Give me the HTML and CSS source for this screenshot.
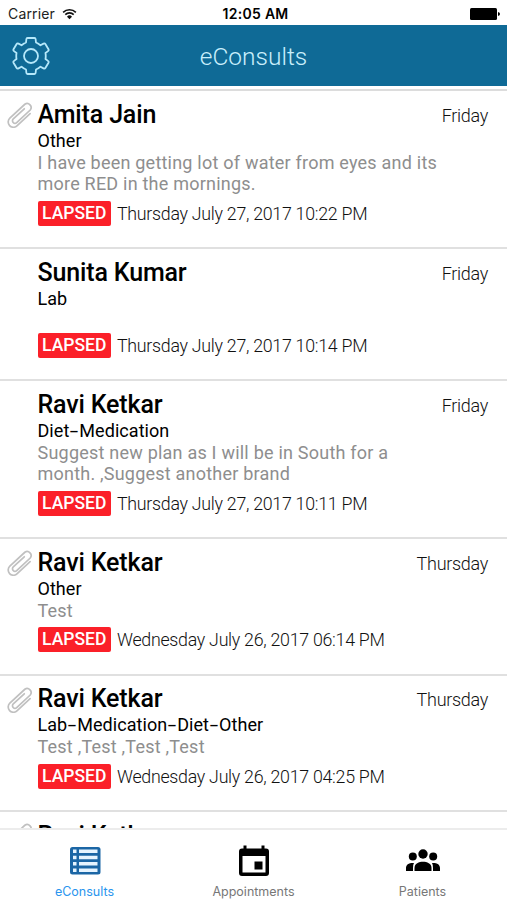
FILE: index.html
```html
<!DOCTYPE html>
<html lang="en">
<head>
  <meta charset="UTF-8">
  <meta name="viewport" content="width=device-width, initial-scale=1.0">
  <title>eConsults</title>
  <link rel="stylesheet" href="styles.css">
</head>
<body>
  <!-- icons used more than once -->
  <svg class="defs" width="0" height="0">
    <symbol id="clip" viewBox="0 0 28 26">
      <path transform="translate(13.500 13) rotate(-43)" d="M8 5.500 H-10 A5.200 5.200 0 0 1 -10 -4.900 H10.500 A4 4 0 0 1 10.500 3 H-8 A2.500 2.500 0 0 1 -8 -2 H7" fill="none" stroke="#c0c0c0" stroke-width="1.700" stroke-linecap="round"/>
    </symbol>
  </svg>

  <div class="status-bar">
    <div class="carrier">
      <span>Carrier</span>
      <svg class="wifi" viewBox="0 0 16 12">
        <path d="M1.200 4.200 A9.800 9.800 0 0 1 14.800 4.200 M3.500 6.600 A6.400 6.400 0 0 1 12.500 6.600" fill="none" stroke="#111" stroke-width="1.700"/>
        <path d="M8 11.500 L5.300 8.800 A3.800 3.800 0 0 1 10.700 8.800 Z" fill="#111"/>
      </svg>
    </div>
    <span class="time">12:05 AM</span>
    <svg class="battery" viewBox="0 0 30 12">
      <rect x="0" y="0" width="27" height="12" rx="1.500"/>
      <path d="M28 4 Q30 4.500 30 6 Q30 7.500 28 8 Z"/>
    </svg>
  </div>

  <header class="nav-bar">
    <svg class="gear" viewBox="0 0 38 38" fill="none" stroke="#b5e8fa" stroke-width="1.800" stroke-linejoin="round">
      <path d="M15.500 1 H22.500 Q23.500 1 23.600 2 L24 5.500 Q26.500 6.500 28.500 8.300 L31.500 6.600 Q32.800 6 33.500 7.200 L36.500 12.300 Q37 13.400 36 14.100 L33.500 16 Q34 19 33.500 22 L36 23.900 Q37 24.600 36.500 25.700 L33.500 30.800 Q32.800 32 31.500 31.400 L28.500 29.700 Q26.500 31.500 24 32.500 L23.600 36 Q23.500 37 22.500 37 H15.500 Q14.500 37 14.400 36 L14 32.500 Q11.500 31.500 9.500 29.700 L6.500 31.400 Q5.200 32 4.500 30.800 L1.500 25.700 Q1 24.600 2 23.900 L4.500 22 Q4 19 4.500 16 L2 14.100 Q1 13.400 1.500 12.300 L4.500 7.200 Q5.200 6 6.500 6.600 L9.500 8.300 Q11.500 6.500 14 5.500 L14.400 2 Q14.500 1 15.500 1 Z"/>
      <circle cx="19" cy="19" r="7"/>
    </svg>
    <h1>eConsults</h1>
  </header>

  <main class="list">
    <article class="consult">
      <svg class="clip"><use href="#clip"/></svg>
      <div class="details">
        <div class="top"><h2>Amita Jain</h2><span class="day">Friday</span></div>
        <p class="type">Other</p>
        <p class="note">I have been getting lot of water from eyes and its<br>more RED in the mornings.</p>
        <div class="when"><span class="badge">LAPSED</span><time>Thursday July 27, 2017 10:22 PM</time></div>
      </div>
    </article>

    <article class="consult">
      <div class="details">
        <div class="top"><h2>Sunita Kumar</h2><span class="day">Friday</span></div>
        <p class="type">Lab</p>
        <p class="note"></p>
        <div class="when"><span class="badge">LAPSED</span><time>Thursday July 27, 2017 10:14 PM</time></div>
      </div>
    </article>

    <article class="consult">
      <div class="details">
        <div class="top"><h2>Ravi Ketkar</h2><span class="day">Friday</span></div>
        <p class="type">Diet<span class="dash">-</span>Medication</p>
        <p class="note">Suggest new plan as I will be in South for a<br>month. ,Suggest another brand</p>
        <div class="when"><span class="badge">LAPSED</span><time>Thursday July 27, 2017 10:11 PM</time></div>
      </div>
    </article>

    <article class="consult">
      <svg class="clip"><use href="#clip"/></svg>
      <div class="details">
        <div class="top"><h2>Ravi Ketkar</h2><span class="day">Thursday</span></div>
        <p class="type">Other</p>
        <p class="note">Test</p>
        <div class="when"><span class="badge">LAPSED</span><time>Wednesday July 26, 2017 06:14 PM</time></div>
      </div>
    </article>

    <article class="consult">
      <svg class="clip"><use href="#clip"/></svg>
      <div class="details">
        <div class="top"><h2>Ravi Ketkar</h2><span class="day">Thursday</span></div>
        <p class="type">Lab<span class="dash">-</span>Medication<span class="dash">-</span>Diet<span class="dash">-</span>Other</p>
        <p class="note">Test ,Test ,Test ,Test</p>
        <div class="when"><span class="badge">LAPSED</span><time>Wednesday July 26, 2017 04:25 PM</time></div>
      </div>
    </article>

    <article class="consult">
      <svg class="clip"><use href="#clip"/></svg>
      <div class="details">
        <div class="top"><h2>Ravi Ketkar</h2></div>
      </div>
    </article>
  </main>

  <nav class="tab-bar">
    <a class="tab active">
      <svg viewBox="0 0 36 36">
        <rect x="3" y="4" width="30.500" height="27.500" rx="2.500" fill="#1b66a5"/>
        <path d="M6 6.500h3.500v3.500h-3.500z M12 6.500h18.500v3.500h-18.500z M6 12.800h3.500v3.500h-3.500z M12 12.800h18.500v3.500h-18.500z M6 19.100h3.500v3.500h-3.500z M12 19.100h18.500v3.500h-18.500z M6 25.400h3.500v3.500h-3.500z M12 25.400h18.500v3.500h-18.500z" fill="#e6f4ff"/>
      </svg>
      <span>eConsults</span>
    </a>
    <a class="tab">
      <svg viewBox="0 0 36 36">
        <path d="M6 5.500 H7.500 V2.500 H10.500 V5.500 H25.500 V2.500 H28.500 V5.500 H30 Q33 5.500 33 8.500 V30 Q33 33 30 33 H6 Q3 33 3 30 V8.500 Q3 5.500 6 5.500 Z M6.500 13 V29.500 H29.500 V13 Z M18.500 18.500 H26.500 V26.500 H18.500 Z" fill-rule="evenodd"/>
      </svg>
      <span>Appointments</span>
    </a>
    <a class="tab">
      <svg viewBox="0 0 36 36">
        <circle cx="18" cy="11" r="4.700"/>
        <circle cx="7.800" cy="13.500" r="4"/>
        <circle cx="28.200" cy="13.500" r="4"/>
        <path d="M9.500 28 V25 C9.500 20.500 14 18.800 18 18.800 S26.500 20.500 26.500 25 V28 Z"/>
        <path d="M1 28 V25 C1 21.500 4 19.700 9 20 Q7.800 22 8 25 V28 Z M35 28 V25 C35 21.500 32 19.700 27 20 Q28.200 22 28 25 V28 Z"/>
      </svg>
      <span>Patients</span>
    </a>
  </nav>
</body>
</html>
```
FILE: styles.css
```css
* {
  box-sizing: border-box;
}

body {
  display: flex;
  flex-direction: column;
  height: 900px;
  margin: 0;
  overflow: hidden;
  background: #fff;
  font-family: Roboto, "Liberation Sans", sans-serif;
}

h1, h2, p {
  margin: 0;
}

.defs {
  position: absolute;
}

/* status bar */
.status-bar {
  display: grid;
  grid-template-columns: 1fr auto 1fr;
  align-items: center;
  height: 25px;
  padding: 2px 7px 0 8px;
  font-family: Inter, sans-serif;
  font-size: 14px;
  color: #222;
}

.carrier {
  display: flex;
  align-items: center;
  gap: 7px;
}

.carrier span {
  letter-spacing: 0.150px;
}

.wifi {
  width: 15px;
  height: 12px;
}

.time {
  margin-left: 3px;
  font-weight: 600;
  letter-spacing: 0.300px;
  color: #000;
}

.battery {
  justify-self: end;
  width: 30px;
  height: 12px;
}

/* header */
.nav-bar {
  display: grid;
  grid-template-columns: 38px 1fr 38px;
  align-items: center;
  height: 61px;
  padding: 0 12px;
  background: #0f6a96;
}

.gear {
  width: 38px;
  height: 38px;
}

.nav-bar h1 {
  padding-top: 2px;
  font-size: 24.500px;
  font-weight: 300;
  text-align: center;
  color: #c9effc;
}

/* consult list */
.list {
  flex: 1;
  min-height: 0;
  margin-top: 3px;
  overflow: hidden;
  border-top: 2px solid #dcdcdc;
}

.consult {
  display: flex;
  justify-content: flex-end;
  padding: 9.500px 19px 21.500px 7px;
  border-bottom: 2px solid #e0e0e0;
}

.clip {
  flex: none;
  width: 28px;
  height: 26px;
  margin: 1.500px 3px 0 0;
}

.details {
  flex: none;
  width: 450.500px;
}

.top {
  display: flex;
  justify-content: space-between;
  height: 28px;
  line-height: 28px;
}

.top h2 {
  font-size: 25px;
  font-weight: 500;
  letter-spacing: -0.150px;
  color: #000;
}

.day {
  padding-top: 1px;
  font-size: 18px;
  font-weight: 300;
  letter-spacing: -0.300px;
  color: #111;
}

.type {
  margin-top: 1px;
  font-size: 18px;
  line-height: 22px;
  letter-spacing: 0.050px;
  color: #000;
}

/* wide hyphen between consult types */
.dash {
  display: inline-block;
  width: 10px;
  text-align: center;
  transform: scaleX(1.700);
}

.note {
  min-height: 17px;
  font-size: 18px;
  line-height: 21.500px;
  letter-spacing: 0.220px;
  color: #8e8e8e;
}

.when {
  display: flex;
  align-items: center;
  gap: 6px;
  margin-top: 6px;
  font-size: 17.800px;
  font-weight: 300;
  letter-spacing: -0.270px;
  color: #111;
}

.badge {
  width: 73.500px;
  border-radius: 2px;
  background: #fb2029;
  font-size: 17.500px;
  font-weight: 500;
  line-height: 25px;
  letter-spacing: 0;
  text-align: center;
  color: #fff;
}

/* bottom tabs */
.tab-bar {
  display: grid;
  grid-template-columns: repeat(3, 1fr);
  height: 72px;
  border-top: 2px solid #ececec;
}

.tab {
  display: flex;
  flex-direction: column;
  align-items: center;
  padding-top: 13px;
  font-family: Inter, sans-serif;
  font-size: 12.500px;
  color: #777;
}

.tab svg {
  width: 36px;
  height: 36px;
}

.tab span {
  margin-top: 5px;
  line-height: 16px;
}

.tab.active {
  color: #2a95ee;
}
```
